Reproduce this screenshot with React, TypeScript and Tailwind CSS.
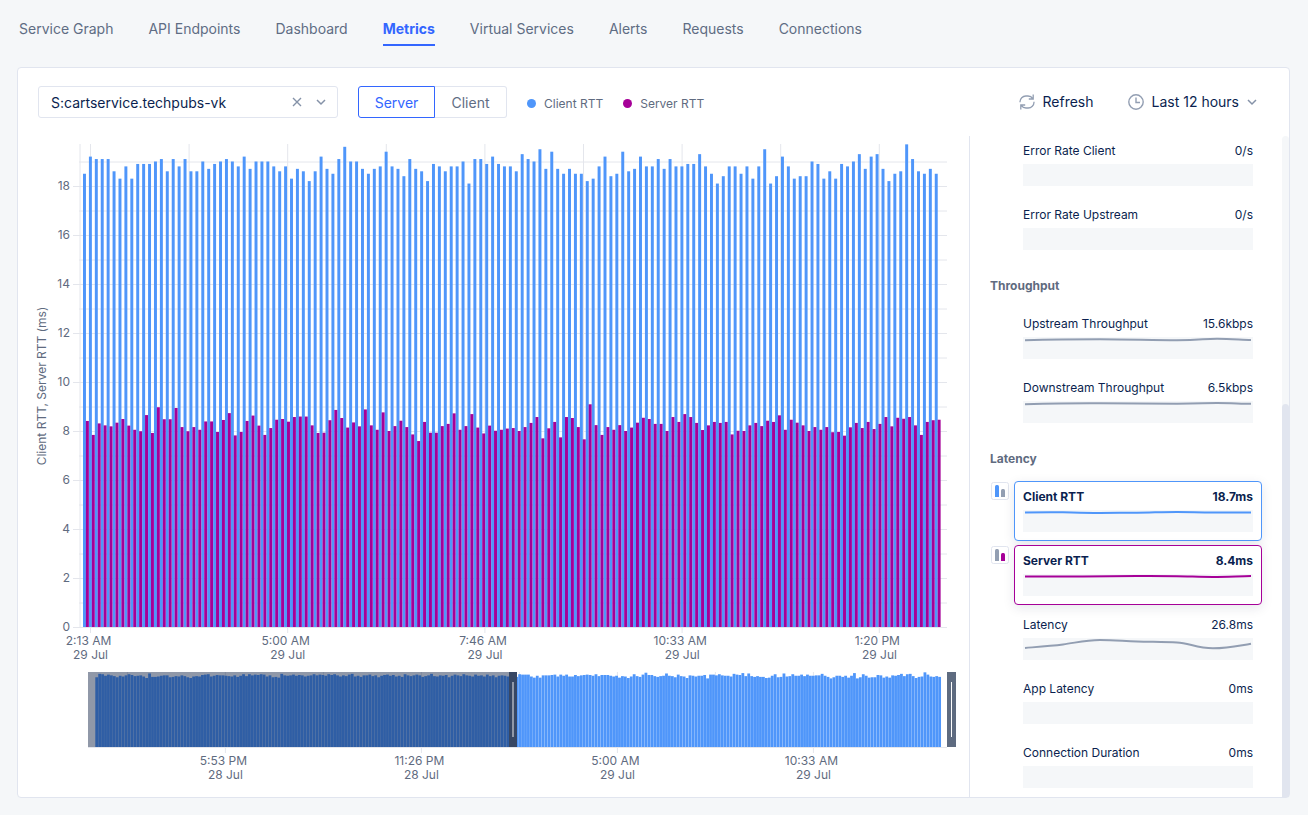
import React, { useState } from "react";

const TABS = [
  "Service Graph",
  "API Endpoints",
  "Dashboard",
  "Metrics",
  "Virtual Services",
  "Alerts",
  "Requests",
  "Connections",
];

const CLIENT_RTT = [
  18.5, 19.2, 19.1, 19.1, 19.1, 18.6, 18.3, 18.8, 18.3, 18.9, 18.9, 18.9, 19.0, 19.1, 18.6, 19.1,
  18.8, 19.1, 18.6, 18.6, 19.0, 18.7, 18.9, 19.0, 19.1, 19.0, 18.8, 19.2, 18.7, 19.0, 19.0, 19.0,
  18.8, 18.6, 18.8, 18.3, 18.7, 18.6, 18.2, 18.6, 19.2, 18.7, 18.5, 19.1, 19.6, 19.0, 19.0, 18.7,
  18.5, 18.7, 18.8, 19.4, 18.8, 18.7, 18.4, 19.1, 18.7, 18.6, 18.2, 18.9, 18.8, 18.6, 18.8, 18.8,
  19.0, 18.1, 19.1, 19.1, 18.9, 19.2, 18.9, 18.8, 18.8, 18.6, 19.3, 19.1, 19.0, 19.5, 18.7, 19.4,
  18.7, 18.5, 18.7, 18.5, 18.5, 18.2, 18.3, 18.8, 19.2, 18.4, 18.5, 19.4, 18.6, 18.7, 19.2, 18.8,
  18.8, 19.1, 18.7, 19.1, 18.8, 18.8, 18.9, 18.9, 19.3, 18.8, 18.5, 18.1, 18.4, 18.8, 18.8, 18.5,
  18.8, 18.3, 18.8, 19.5, 18.1, 18.4, 19.2, 18.8, 18.3, 18.4, 18.4, 19.0, 18.9, 18.3, 18.6, 18.3,
  18.9, 18.8, 19.0, 19.3, 18.7, 19.2, 19.3, 18.7, 18.2, 18.5, 18.6, 19.7, 19.1, 18.6, 18.5, 18.7,
  18.5,
];

const SERVER_RTT = [
  8.41, 7.84, 8.31, 8.23, 8.19, 8.34, 8.49, 8.22, 8.05, 7.99, 8.65, 7.92, 8.97, 8.48, 8.48, 8.94,
  8.16, 7.99, 8.16, 8.05, 8.39, 8.39, 7.96, 8.45, 8.73, 7.82, 7.96, 8.41, 8.63, 8.22, 7.84, 8.12,
  8.46, 8.49, 8.38, 8.57, 8.59, 8.59, 8.23, 7.92, 7.93, 8.44, 8.86, 8.53, 8.14, 8.35, 8.19, 8.88,
  8.23, 8.05, 8.76, 8.0, 8.2, 8.42, 8.16, 7.86, 7.59, 8.37, 7.93, 7.93, 8.2, 8.29, 8.72, 8.05,
  8.2, 8.69, 8.14, 7.9, 8.22, 8.01, 8.05, 8.1, 8.12, 8.0, 8.16, 8.33, 8.57, 7.7, 8.11, 8.37,
  7.74, 8.57, 8.53, 8.16, 7.66, 9.09, 8.24, 7.84, 8.16, 8.05, 8.24, 8.0, 8.14, 8.34, 8.54, 8.49,
  8.29, 8.29, 8.0, 8.57, 8.37, 8.69, 8.57, 8.33, 8.04, 8.23, 8.37, 8.33, 8.37, 7.86, 8.01, 8.0,
  8.23, 8.33, 8.2, 8.42, 8.37, 8.64, 8.05, 8.46, 8.34, 8.23, 8.0, 8.16, 8.05, 8.16, 7.95, 7.96,
  7.81, 8.15, 8.33, 8.12, 8.37, 8.08, 8.29, 8.57, 8.19, 8.54, 8.5, 8.57, 8.23, 7.84, 8.37, 8.44,
  8.46,
];

// Twelve hours that precede the visible window.
const EARLIER_RTT = [
  18.4, 19.3, 19.2, 18.8, 19.1, 18.9, 18.7, 18.4, 18.8, 18.6, 18.9, 19.2, 19.0, 18.7, 18.8, 18.9,
  18.6, 18.2, 19.4, 18.5, 18.5, 18.6, 18.8, 18.9, 18.9, 18.4, 18.5, 18.7, 18.6, 18.9, 18.7, 18.4,
  18.2, 18.6, 18.7, 18.6, 19.0, 19.1, 19.2, 18.6, 18.8, 19.0, 18.9, 18.9, 18.8, 18.7, 18.6, 18.9,
  18.5, 18.8, 19.2, 18.7, 19.2, 18.9, 19.1, 19.0, 19.2, 19.1, 18.6, 18.9, 18.4, 18.5, 18.3, 19.3,
  18.9, 18.8, 18.9, 19.1, 18.8, 19.0, 18.9, 18.6, 18.8, 18.9, 19.2, 18.9, 19.1, 19.0, 18.8, 19.2,
  19.0, 19.2, 18.9, 18.6, 18.9, 18.7, 19.1, 19.3, 18.6, 18.8, 18.5, 18.9, 18.9, 19.1, 18.7, 18.9,
  18.4, 18.8, 19.0, 19.1, 18.8, 19.0, 18.6, 18.8, 18.5, 19.2, 18.9, 18.7, 18.9, 19.1, 18.9, 18.5,
  18.7, 18.9, 19.3, 18.7, 18.6, 18.9, 18.8, 19.0, 18.4, 18.8, 19.1, 18.9, 18.7, 19.2, 18.9, 18.8,
  18.6, 19.1, 18.8, 18.9, 18.6, 19.1, 18.7, 18.9, 18.4, 18.8, 18.9, 18.8, 18.6, 18.8, 19.3,
];

const NAVIGATOR_RTT = [...EARLIER_RTT, ...CLIENT_RTT];

const BASE_Y = 491;
const UNIT = 24.5;
const STEP = 5.915;
const NAV_BASE = 611;
const NAV_STEP = 2.937;

const X_TICKS = [
  { x: 72.5, time: "2:13 AM", date: "29 Jul" },
  { x: 269.7, time: "5:00 AM", date: "29 Jul" },
  { x: 467, time: "7:46 AM", date: "29 Jul" },
  { x: 664.2, time: "10:33 AM", date: "29 Jul" },
  { x: 861.4, time: "1:20 PM", date: "29 Jul" },
];

const NAV_TICKS = [
  { x: 207.4, time: "5:53 PM", date: "28 Jul" },
  { x: 403.4, time: "11:26 PM", date: "28 Jul" },
  { x: 599.4, time: "5:00 AM", date: "29 Jul" },
  { x: 795.4, time: "10:33 AM", date: "29 Jul" },
];

function RttChart() {
  return (
    <svg
      viewBox="0 0 951 661"
      className="block h-auto w-full font-['Inter',sans-serif] text-[12px]"
      role="img"
      aria-label="Client RTT and Server RTT in milliseconds"
    >
      <g stroke="#e4e6ec" strokeWidth="1">
        {Array.from({ length: 20 }, (_, v) => (
          <line
            key={v}
            x1={v % 2 === 0 ? 55 : 61}
            x2="929"
            y1={BASE_Y + 0.5 - v * UNIT}
            y2={BASE_Y + 0.5 - v * UNIT}
          />
        ))}
        <line x1="62" x2="62" y1="8" y2="491" />
        {Array.from({ length: 9 }, (_, i) => (
          <line
            key={i}
            x1={72.5 + i * 98.6}
            x2={72.5 + i * 98.6}
            y1="8"
            y2={i % 2 === 0 ? 497 : 491}
          />
        ))}
      </g>

      <g fill="#4f96fa">
        {CLIENT_RTT.map((v, i) => (
          <rect key={i} x={65 + i * STEP} y={BASE_Y - v * UNIT} width="2.96" height={v * UNIT} />
        ))}
      </g>
      <g fill="#a60098">
        {SERVER_RTT.map((v, i) => (
          <rect key={i} x={67.9 + i * STEP} y={BASE_Y - v * UNIT} width="2.96" height={v * UNIT} />
        ))}
      </g>

      <g fill="#5f6b80">
        {[0, 2, 4, 6, 8, 10, 12, 14, 16, 18].map((v) => (
          <text key={v} x="52" y={BASE_Y + 4 - v * UNIT} textAnchor="end">
            {v}
          </text>
        ))}
        <text transform="translate(28 250) rotate(-90)" textAnchor="middle">
          Client RTT, Server RTT (ms)
        </text>
        {X_TICKS.map((t) => (
          <g key={t.x} textAnchor="middle">
            <text x={t.x - 2} y="509">
              {t.time}
            </text>
            <text x={t.x} y="523">
              {t.date}
            </text>
          </g>
        ))}
      </g>

      <g stroke="#e4e6ec" strokeWidth="1">
        {Array.from({ length: 8 }, (_, i) => (
          <line
            key={i}
            x1={109.4 + i * 98}
            x2={109.4 + i * 98}
            y1="536"
            y2={i % 2 === 1 ? 617 : 611}
          />
        ))}
        <line x1="70" x2="929" y1="611.5" y2="611.5" />
      </g>
      <g fill="#4f96fa">
        {NAVIGATOR_RTT.map((v, i) => (
          <rect
            key={i}
            x={77.3 + i * NAV_STEP}
            y={NAV_BASE - v * 3.79}
            width="2.8"
            height={v * 3.79}
          />
        ))}
      </g>
      <rect x="491" y="536" width="8" height="75" fill="#5e6c84" />
      <rect x="494" y="546" width="2" height="55" fill="#ffffff" />
      <rect x="70" y="536" width="429" height="75" fill="#091a3e" fillOpacity="0.45" />
      <rect x="929" y="536" width="9" height="75" fill="#5e6b80" />
      <rect x="933" y="546" width="1" height="55" fill="#ffffff" />
      <g fill="#5f6b80">
        {NAV_TICKS.map((t) => (
          <g key={t.x} textAnchor="middle">
            <text x={t.x - 2} y="629">
              {t.time}
            </text>
            <text x={t.x} y="643">
              {t.date}
            </text>
          </g>
        ))}
      </g>
    </svg>
  );
}

type Tone = "grey" | "blue" | "magenta";

const STROKES: Record<Tone, string> = { grey: "#929eb2", blue: "#4f96fa", magenta: "#a60098" };
const CARD_TONES: Record<Tone, string> = {
  grey: "border-transparent",
  blue: "border-[#4f96fa] bg-white font-bold shadow-[0_3px_12px_rgba(9,30,66,0.1)]",
  magenta: "border-[#a60098] bg-white font-bold shadow-[0_3px_12px_rgba(9,30,66,0.1)]",
};

interface MetricProps {
  name: string;
  value: string;
  tone?: Tone;
  line?: string;
}

function SeriesIcon({ tone }: { tone: Tone }) {
  return (
    <svg viewBox="0 0 18 18" className="mt-px size-[18px] shrink-0" aria-hidden="true">
      <rect x="0.5" y="0.5" width="17" height="17" rx="2" fill="#fff" stroke="#e1e5ef" />
      <rect x="4" y="3" width="4" height="12" rx="1.5" fill={tone === "blue" ? "#4f96fa" : "#929eb2"} />
      <rect x="4" y="9" width="4" height="6" fill={tone === "blue" ? "#4f96fa" : "#929eb2"} />
      <rect x="10" y="7" width="4" height="8" rx="1.5" fill={tone === "magenta" ? "#a60098" : "#929eb2"} />
      <rect x="10" y="10" width="4" height="5" fill={tone === "magenta" ? "#a60098" : "#929eb2"} />
    </svg>
  );
}

function Metric({ name, value, tone = "grey", line }: MetricProps) {
  return (
    <li className="flex gap-[5px] pr-5 pl-[21px]">
      {tone === "grey" ? <span className="w-[18px] shrink-0" /> : <SeriesIcon tone={tone} />}
      <button
        type="button"
        className={`block min-w-0 flex-1 rounded-[4px] border px-2 pt-[7px] pb-2 text-left text-[12px] leading-4 text-[#0b1f4f] ${CARD_TONES[tone]}`}
      >
        <span className="flex justify-between">
          <span>{name}</span>
          <span>{value}</span>
        </span>
        <svg
          viewBox="0 0 230 22"
          preserveAspectRatio="none"
          className="mt-[5px] block h-[22px] w-full bg-[#f5f7f9]"
          aria-hidden="true"
        >
          {line && <path d={line} fill="none" stroke={STROKES[tone]} strokeWidth="2" />}
        </svg>
      </button>
    </li>
  );
}

function SectionTitle({ children }: { children: React.ReactNode }) {
  return (
    <h2 className="mt-[17px] mb-3 pl-5 text-[12px] leading-5 font-bold text-[#5f6b80]">{children}</h2>
  );
}

function Chevron() {
  return (
    <svg viewBox="0 0 10 10" className="size-[10px]" fill="none" stroke="#8592a8" strokeWidth="1.5" aria-hidden="true">
      <path d="M1 3l4 4 4-4" />
    </svg>
  );
}

export default function App() {
  const [service, setService] = useState("S:cartservice.techpubs-vk");
  return (
    <div className="min-h-screen bg-[#f5f7f9] pr-[18px] pb-[17px] pl-[17px] font-['Inter',sans-serif] text-[14px]">
      <nav className="flex h-[67px] gap-[35px] pt-[19px] pl-[2px] leading-5 text-[#5f6d84]">
        {TABS.map((tab) => (
          <a
            key={tab}
            href="#"
            className={
              tab === "Metrics"
                ? "h-[27px] border-b-2 border-[#3366ff] font-bold whitespace-nowrap text-[#3366ff]"
                : "h-[27px] whitespace-nowrap"
            }
          >
            {tab}
          </a>
        ))}
      </nav>

      <main className="rounded-[4px] border border-[#e1e5ef] bg-white">
        <header className="flex h-[68px] items-center pr-8 pl-5">
          <div className="flex h-8 w-[300px] items-center rounded-[3px] border border-[#e1e5ef] pr-[11px] pl-3">
            <input
              aria-label="Service"
              value={service}
              onChange={(e) => setService(e.target.value)}
              className="min-w-0 flex-1 bg-transparent pt-px leading-5 text-[#0b1f4f] outline-none"
            />
            <button type="button" aria-label="Clear" onClick={() => setService("")} className="mr-[14px]">
              <svg viewBox="0 0 10 10" className="size-[10px]" fill="none" stroke="#8592a8" strokeWidth="1.4">
                <path d="M1 1l8 8M9 1l-8 8" />
              </svg>
            </button>
            <button type="button" aria-label="Open list">
              <Chevron />
            </button>
          </div>

          <div className="ml-5 flex h-8">
            <button type="button" className="w-[77px] rounded-l-[3px] border border-[#3366ff] text-[#3366ff]">
              Server
            </button>
            <button type="button" className="w-[72px] rounded-r-[3px] border border-l-0 border-[#e1e5ef] text-[#5f6d84]">
              Client
            </button>
          </div>

          <ul className="mt-[3px] ml-5 flex gap-5 text-[12px] leading-4 text-[#5f6b80]">
            <li className="flex items-center gap-2">
              <span className="size-[9px] rounded-full bg-[#4f96fa]" />
              Client RTT
            </li>
            <li className="flex items-center gap-2">
              <span className="size-[9px] rounded-full bg-[#a60098]" />
              Server RTT
            </li>
          </ul>

          <div className="ml-auto flex gap-[34px] leading-5 text-[#0b1f4f]">
            <button type="button" className="flex items-center gap-2">
              <svg viewBox="0 0 16 16" className="size-4" fill="none" stroke="#929eb2" strokeWidth="1.3" aria-hidden="true">
                <path d="M1 8.200V7.800A5.800 5.800 0 0 1 6.800 2H9A5.800 5.800 0 0 1 13.800 4.600M14.200 0.500V5H9.800" />
                <path d="M15 7.800V8.200A5.800 5.800 0 0 1 9.200 14H7A5.800 5.800 0 0 1 2.200 11.400M1.800 15.500V11H6.200" />
              </svg>
              Refresh
            </button>
            <button type="button" className="flex items-center gap-2">
              <svg viewBox="0 0 16 16" className="size-4" fill="none" stroke="#929eb2" strokeWidth="1.4" aria-hidden="true">
                <circle cx="8" cy="8" r="7.2" />
                <path d="M8 3.500V8.500H12" />
              </svg>
              Last 12 hours
              <Chevron />
            </button>
          </div>
        </header>

        <div className="flex">
          <section className="min-w-0 flex-1">
            <RttChart />
          </section>

          <aside className="flex w-[320px] shrink-0 border-l border-[#e1e5ef]">
            <div className="-mt-px min-w-0 flex-1">
              <ul className="space-y-1">
                <Metric name="Error Rate Client" value="0/s" />
                <Metric name="Error Rate Upstream" value="0/s" />
              </ul>
              <SectionTitle>Throughput</SectionTitle>
              <ul className="space-y-1">
                <Metric
                  name="Upstream Throughput"
                  value="15.6kbps"
                  line="M2 3.200C30 2.400 50 2.200 77 2.200S130 3.200 154 3.200S180 1.800 194 1.800S218 2.800 228 3"
                />
                <Metric
                  name="Downstream Throughput"
                  value="6.5kbps"
                  line="M2 3.200C30 2.400 50 2 77 2.200S130 2.800 154 2.800S180 2 194 2S218 2.800 228 2.800"
                />
              </ul>
              <SectionTitle>Latency</SectionTitle>
              <ul className="space-y-1">
                <Metric
                  name="Client RTT"
                  value="18.7ms"
                  tone="blue"
                  line="M2 2.400C20 2.200 32 2.200 40 2.300S60 2.900 77 2.900S98 2.900 114 2.700S140 2 154 2S175 2.600 190 2.600H228"
                />
                <Metric
                  name="Server RTT"
                  value="8.4ms"
                  tone="magenta"
                  line="M2 2.400H60C80 2.400 100 2 114 2S145 2.300 154 2.300S178 2.900 190 2.900S216 2.200 228 2"
                />
                <Metric
                  name="Latency"
                  value="26.8ms"
                  line="M2 10C18 8.600 28 7.800 40 6.400S62 2 77 2S100 3 114 3.400S142 3.800 154 4.400S174 10.300 190 10.300S214 8 228 5.700"
                />
                <Metric name="App Latency" value="0ms" />
                <Metric name="Connection Duration" value="0ms" />
              </ul>
            </div>
            <div className="flex w-[7px] shrink-0 flex-col justify-end rounded-t bg-[#f5f7f9]">
              <div className="h-[59.5%] rounded-t bg-[#e1e5ef]" />
            </div>
          </aside>
        </div>
      </main>
    </div>
  );
}
